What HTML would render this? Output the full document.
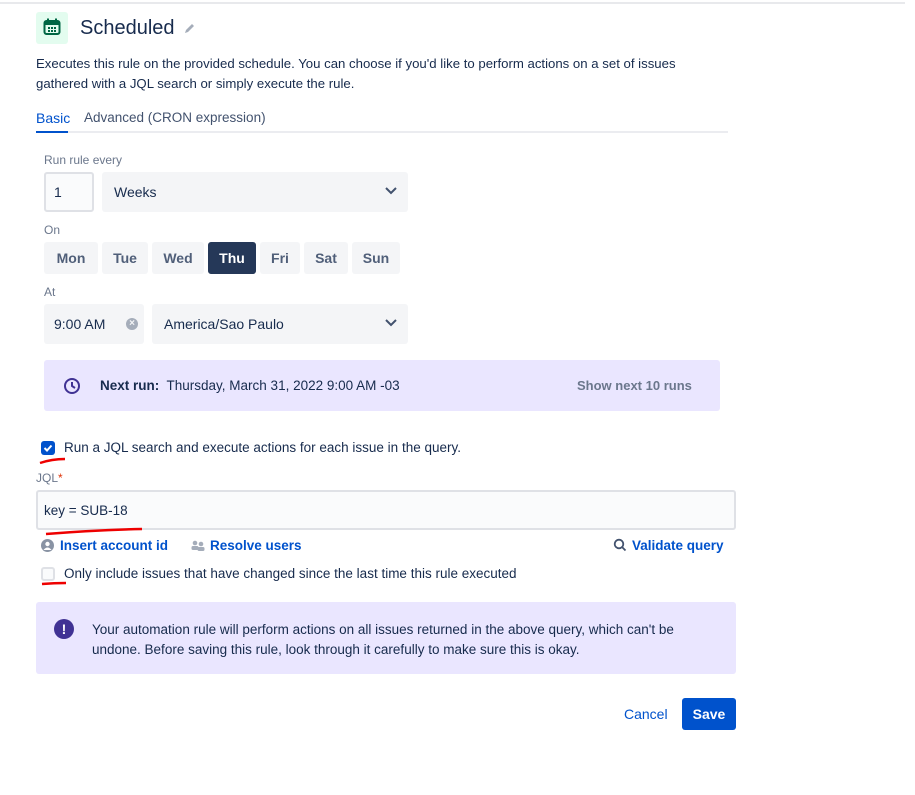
<!DOCTYPE html><html><head><style>
*{box-sizing:border-box;margin:0;padding:0}
body{width:915px;height:795px;background:#fff;font-family:"Liberation Sans",sans-serif;color:#172b4d;position:relative;overflow:hidden;font-size:14px}
.a{position:absolute;white-space:nowrap}
.lbl{font-size:12px;color:#6b778c}
.box{position:absolute;background:#f4f5f7;border-radius:3px}
.day{position:absolute;top:242px;height:32px;background:#f4f5f7;border-radius:3px;font-size:14px;font-weight:bold;color:#505f79;text-align:center;line-height:32px}
.lnk{color:#0052cc;font-weight:bold;font-size:13.5px}
</style></head><body>
<div class="a" style="left:0;top:2px;width:905px;height:2px;background:#e8e9ec"></div>
<div class="a" style="left:36px;top:12px;width:32px;height:32px;background:#e3fcef;border-radius:3px"></div>
<svg class="a" style="left:43px;top:18px" width="18" height="18" viewBox="0 0 18 18"><rect x="1.5" y="3" width="15" height="13" rx="2" fill="none" stroke="#006644" stroke-width="2"/><rect x="1.5" y="3" width="15" height="4" fill="#006644"/><rect x="4" y="0.5" width="2" height="4" fill="#006644"/><rect x="12" y="0.5" width="2" height="4" fill="#006644"/><g fill="#006644"><rect x="5" y="9" width="2" height="2"/><rect x="8" y="9" width="2" height="2"/><rect x="11" y="9" width="2" height="2"/><rect x="5" y="12" width="2" height="2"/><rect x="8" y="12" width="2" height="2"/><rect x="11" y="12" width="2" height="2"/></g></svg>
<div class="a" style="left:80px;top:17px;font-size:20px;color:#172b4d">Scheduled</div>
<svg class="a" style="left:184px;top:22px" width="12" height="12" viewBox="0 0 12 12"><path d="M1 11l1-3 6-6 2 2-6 6z" fill="#a5adba"/></svg>
<div class="a" style="left:36px;top:54px;font-size:13.2px;line-height:20px;color:#172b4d">Executes this rule on the provided schedule. You can choose if you'd like to perform actions on a set of issues<br>gathered with a JQL search or simply execute the rule.</div>
<div class="a" style="left:36px;top:110px;font-size:14px;color:#0052cc">Basic</div>
<div class="a" style="left:84px;top:110px;font-size:13.5px;color:#42526e">Advanced (CRON expression)</div>
<div class="a" style="left:36px;top:131px;width:692px;height:2px;background:#ebecf0"></div>
<div class="a" style="left:36px;top:131px;width:32px;height:2px;background:#0052cc"></div>
<div class="a lbl" style="left:44px;top:153px">Run rule every</div>
<div class="a" style="left:44px;top:172px;width:50px;height:40px;border:2px solid #dfe1e6;border-radius:3px;background:#fafbfc;padding:10px 0 0 8px;font-size:14px">1</div>
<div class="box" style="left:102px;top:172px;width:306px;height:40px"></div>
<div class="a" style="left:114px;top:184px;font-size:14px">Weeks</div>
<svg class="a" style="left:384px;top:186px" width="14" height="10"><path d="M2 2l5 5 5-5" fill="none" stroke="#42526e" stroke-width="2"/></svg>
<div class="a lbl" style="left:44px;top:223px">On</div>
<div class="day" style="left:44px;width:54px">Mon</div>
<div class="day" style="left:102px;width:46px">Tue</div>
<div class="day" style="left:152px;width:52px">Wed</div>
<div class="day" style="left:208px;width:48px;background:#253858;color:#fff">Thu</div>
<div class="day" style="left:260px;width:40px">Fri</div>
<div class="day" style="left:304px;width:44px">Sat</div>
<div class="day" style="left:352px;width:48px">Sun</div>
<div class="a lbl" style="left:44px;top:285px">At</div>
<div class="box" style="left:44px;top:304px;width:100px;height:40px"></div>
<div class="a" style="left:54px;top:316px">9:00 AM</div>
<div class="a" style="left:126px;top:318px;width:12px;height:12px;border-radius:50%;background:#a5adba;color:#f4f5f7;font-size:10px;line-height:12px;text-align:center;font-weight:bold">×</div>
<div class="box" style="left:152px;top:304px;width:256px;height:40px"></div>
<div class="a" style="left:164px;top:316px">America/Sao Paulo</div>
<svg class="a" style="left:384px;top:318px" width="14" height="10"><path d="M2 2l5 5 5-5" fill="none" stroke="#42526e" stroke-width="2"/></svg>
<div class="box" style="left:44px;top:360px;width:676px;height:51px;background:#eae6ff"></div>
<svg class="a" style="left:63px;top:377px" width="18" height="18"><circle cx="9" cy="9" r="7" fill="none" stroke="#403294" stroke-width="2"/><path d="M9 5v4l3 2" fill="none" stroke="#403294" stroke-width="2"/></svg>
<div class="a" style="left:100px;top:378px;font-size:13.5px"><b>Next run:</b>&nbsp; Thursday, March 31, 2022 9:00 AM -03</div>
<div class="a" style="left:577px;top:378px;color:#6b778c;font-weight:bold;font-size:13px">Show next 10 runs</div>
<div class="a" style="left:41px;top:441px;width:14px;height:14px;background:#0052cc;border-radius:3px"></div>
<svg class="a" style="left:41px;top:441px" width="14" height="14"><path d="M3.5 7l2.5 2.5 4.5-5" fill="none" stroke="#fff" stroke-width="2"/></svg>
<svg class="a" style="left:38px;top:456px" width="30" height="10"><path d="M2 7q12-4 25-4" fill="none" stroke="#e00" stroke-width="2.5"/></svg>
<div class="a" style="left:64px;top:440px;font-size:13.5px">Run a JQL search and execute actions for each issue in the query.</div>
<div class="a lbl" style="left:36px;top:471px">JQL<span style="color:#de350b">*</span></div>
<div class="a" style="left:36px;top:490px;width:700px;height:40px;border:2px solid #dfe1e6;border-radius:3px;background:#fafbfc"></div>
<div class="a" style="left:44px;top:503px;font-size:13.5px">key = SUB-18</div>
<svg class="a" style="left:44px;top:527px" width="100" height="10"><path d="M2 7q50-4 96-5" fill="none" stroke="#e00" stroke-width="2.5"/></svg>
<svg class="a" style="left:41px;top:539px" width="13" height="13"><circle cx="6.5" cy="6.5" r="6.5" fill="#8993a4"/><circle cx="6.5" cy="5" r="2.2" fill="#fff"/><path d="M2.5 11q4-5 8 0" fill="#fff"/></svg>
<div class="a lnk" style="left:60px;top:538px">Insert account id</div>
<svg class="a" style="left:191px;top:540px" width="14" height="12"><circle cx="4" cy="3" r="2.3" fill="#a5adba"/><circle cx="10" cy="4" r="2.3" fill="#a5adba"/><rect x="0.5" y="6" width="7" height="4" rx="1.5" fill="#a5adba"/><rect x="6.5" y="7" width="7" height="4" rx="1.5" fill="#a5adba"/></svg>
<div class="a lnk" style="left:210px;top:538px">Resolve users</div>
<svg class="a" style="left:613px;top:538px" width="14" height="14"><circle cx="6" cy="6" r="4.3" fill="none" stroke="#42526e" stroke-width="1.8"/><path d="M9 9l3.5 3.5" stroke="#42526e" stroke-width="1.8"/></svg>
<div class="a lnk" style="left:632px;top:538px">Validate query</div>
<div class="a" style="left:41px;top:567px;width:14px;height:14px;border:2px solid #dfe1e6;border-radius:3px;background:#fafbfc"></div>
<svg class="a" style="left:40px;top:580px" width="30" height="8"><path d="M2 4q12-1 24-1" fill="none" stroke="#e00" stroke-width="2.5"/></svg>
<div class="a" style="left:64px;top:566px;font-size:13.5px">Only include issues that have changed since the last time this rule executed</div>
<div class="box" style="left:36px;top:602px;width:700px;height:72px;background:#eae6ff"></div>
<div class="a" style="left:54px;top:619px;width:20px;height:20px;border-radius:50%;background:#403294;color:#fff;font-weight:bold;text-align:center;line-height:20px;font-size:14px">!</div>
<div class="a" style="left:92px;top:620px;font-size:13.5px;line-height:20px">Your automation rule will perform actions on all issues returned in the above query, which can't be<br>undone. Before saving this rule, look through it carefully to make sure this is okay.</div>
<div class="a" style="left:624px;top:706px;color:#0052cc;font-size:14px">Cancel</div>
<div class="a" style="left:682px;top:698px;width:54px;height:32px;background:#0052cc;border-radius:3px;color:#fff;font-weight:bold;text-align:center;line-height:32px">Save</div>
</body></html>
